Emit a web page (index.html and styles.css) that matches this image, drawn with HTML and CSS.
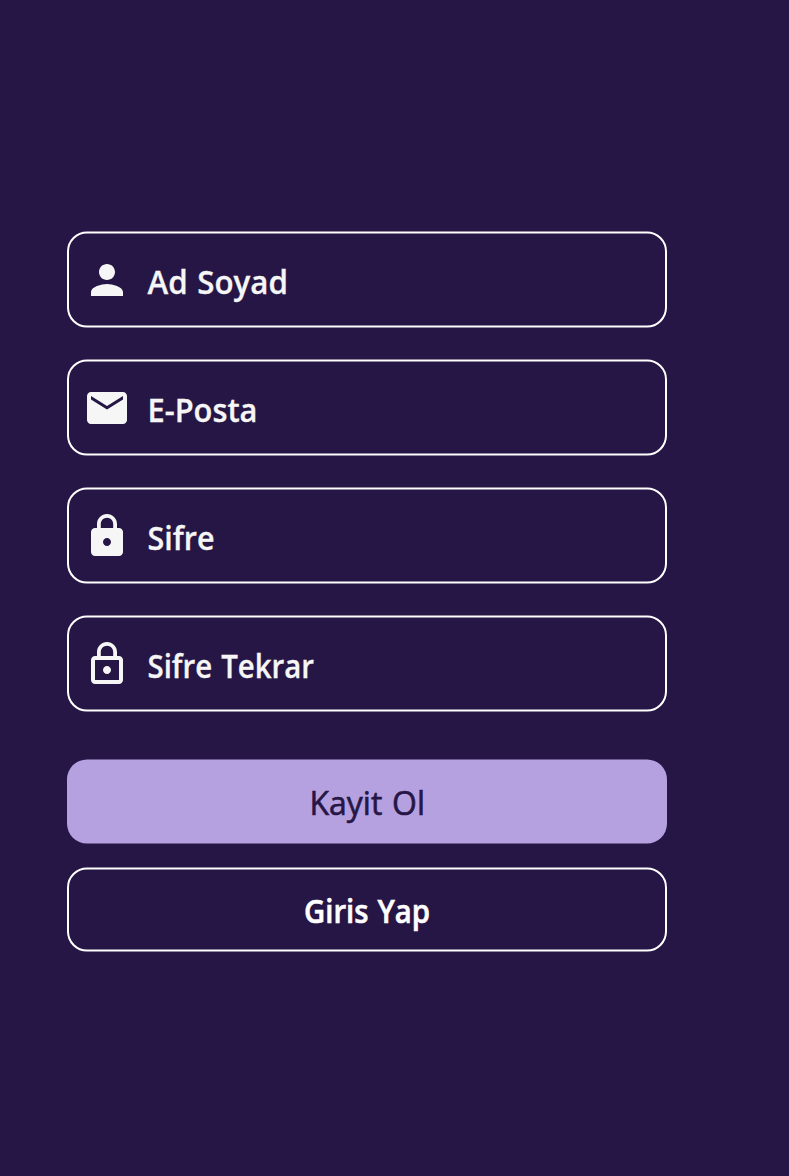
FILE: index.html
```html
<!DOCTYPE html>
<html lang="tr">
<head>
<meta charset="utf-8">
<title>Kayit Ol</title>
<link rel="stylesheet" href="styles.css">
</head>
<body>
<main class="form">
  <div class="field frame">
    <svg class="icon" viewBox="0 0 24 24"><path d="M12 12c2.21 0 4-1.79 4-4s-1.79-4-4-4-4 1.79-4 4 1.79 4 4 4zm0 2c-2.67 0-8 1.34-8 4v2h16v-2c0-2.66-5.33-4-8-4z"/></svg>
    <svg class="label" width="240" height="48"><text x="2.5" y="38" textLength="140.5" lengthAdjust="spacingAndGlyphs">Ad Soyad</text></svg>
  </div>
  <div class="field frame">
    <svg class="icon" viewBox="0 0 24 24"><path d="M20 4H4c-1.1 0-1.99.9-1.99 2L2 18c0 1.1.9 2 2 2h16c1.1 0 2-.9 2-2V6c0-1.1-.9-2-2-2zm0 3.8l-8 5-8-5V6l8 5 8-5v1.8z"/></svg>
    <svg class="label" width="240" height="48"><text x="2.5" y="38" textLength="110" lengthAdjust="spacingAndGlyphs">E-Posta</text></svg>
  </div>
  <div class="field frame">
    <svg class="icon" viewBox="0 0 24 24"><path d="M18 8h-1V6c0-2.76-2.24-5-5-5S7 3.24 7 6v2H6c-1.1 0-2 .9-2 2v10c0 1.1.9 2 2 2h12c1.1 0 2-.9 2-2V10c0-1.1-.9-2-2-2zm-6 9c-1.1 0-2-.9-2-2s.9-2 2-2 2 .9 2 2-.9 2-2 2zm3.1-9H8.9V6c0-1.71 1.39-3.1 3.1-3.1 1.71 0 3.1 1.39 3.1 3.1v2z"/></svg>
    <svg class="label" width="240" height="48"><text x="2.5" y="38" textLength="67" lengthAdjust="spacingAndGlyphs">Sifre</text></svg>
  </div>
  <div class="field frame">
    <svg class="icon" viewBox="0 0 24 24"><path d="M12 17c1.1 0 2-.9 2-2s-.9-2-2-2-2 .9-2 2 .9 2 2 2zm6-9h-1V6c0-2.76-2.24-5-5-5S7 3.24 7 6v2H6c-1.1 0-2 .9-2 2v10c0 1.1.9 2 2 2h12c1.1 0 2-.9 2-2V10c0-1.1-.9-2-2-2zM8.9 6c0-1.71 1.39-3.1 3.1-3.1s3.1 1.39 3.1 3.1v2H8.9V6zM18 20H6V10h12v10z"/></svg>
    <svg class="label" width="240" height="48"><text x="2.5" y="38" textLength="166.5" lengthAdjust="spacingAndGlyphs">Sifre Tekrar</text></svg>
  </div>
  <button class="button frame primary"><svg class="caption" width="200" height="48"><text x="42.5" y="37" textLength="115.5" lengthAdjust="spacingAndGlyphs">Kayit Ol</text></svg></button>
  <button class="button frame outline"><svg class="caption" width="200" height="48"><text x="37" y="37" textLength="126" lengthAdjust="spacingAndGlyphs">Giris Yap</text></svg></button>
</main>
</body>
</html>
```
FILE: styles.css
```css
* { box-sizing: border-box; }
body {
  margin: 0;
  min-height: 1176px;
  background: #261645;
  font-family: "Segoe UI", "Open Sans", "Noto Sans", sans-serif;
}
.form {
  width: 667px;
  padding: 232px 0 0 67px;
  display: flex;
  flex-direction: column;
}
.frame { position: relative; isolation: isolate; }
/* Rounded outline behind each control, set half a pixel up */
.frame::before {
  content: "";
  position: absolute;
  inset: 0;
  z-index: -1;
  border: 2px solid #fff;
  border-radius: 20px;
  transform: translateY(-0.5px);
}
.field {
  height: 96px;
  margin-bottom: 32px;
  display: flex;
  align-items: center;
  padding: 0 16px;
}
.icon { width: 48px; height: 48px; fill: #f6f6f6; }
.label {
  margin-left: 14px;
  fill: #f6f6f6;
  stroke: #f6f6f6;
  stroke-width: 0.3px;
  font-size: 32px;
  font-weight: 600;
  word-spacing: 1.5px;
}
.button {
  height: 84px;
  padding: 0;
  border: 0;
  background: transparent;
  font: 600 32px "Segoe UI", "Open Sans", "Noto Sans", sans-serif;
  word-spacing: 1.5px;
  display: flex;
  align-items: center;
  justify-content: center;
}
.primary { margin-top: 16px; color: #261645; font-weight: 400; }
.primary::before { border: 0; background: #b5a1e0; }
.outline { margin-top: 24px; color: #fff; }
.caption { fill: currentColor; stroke: currentColor; stroke-width: 0.6px; }
```
